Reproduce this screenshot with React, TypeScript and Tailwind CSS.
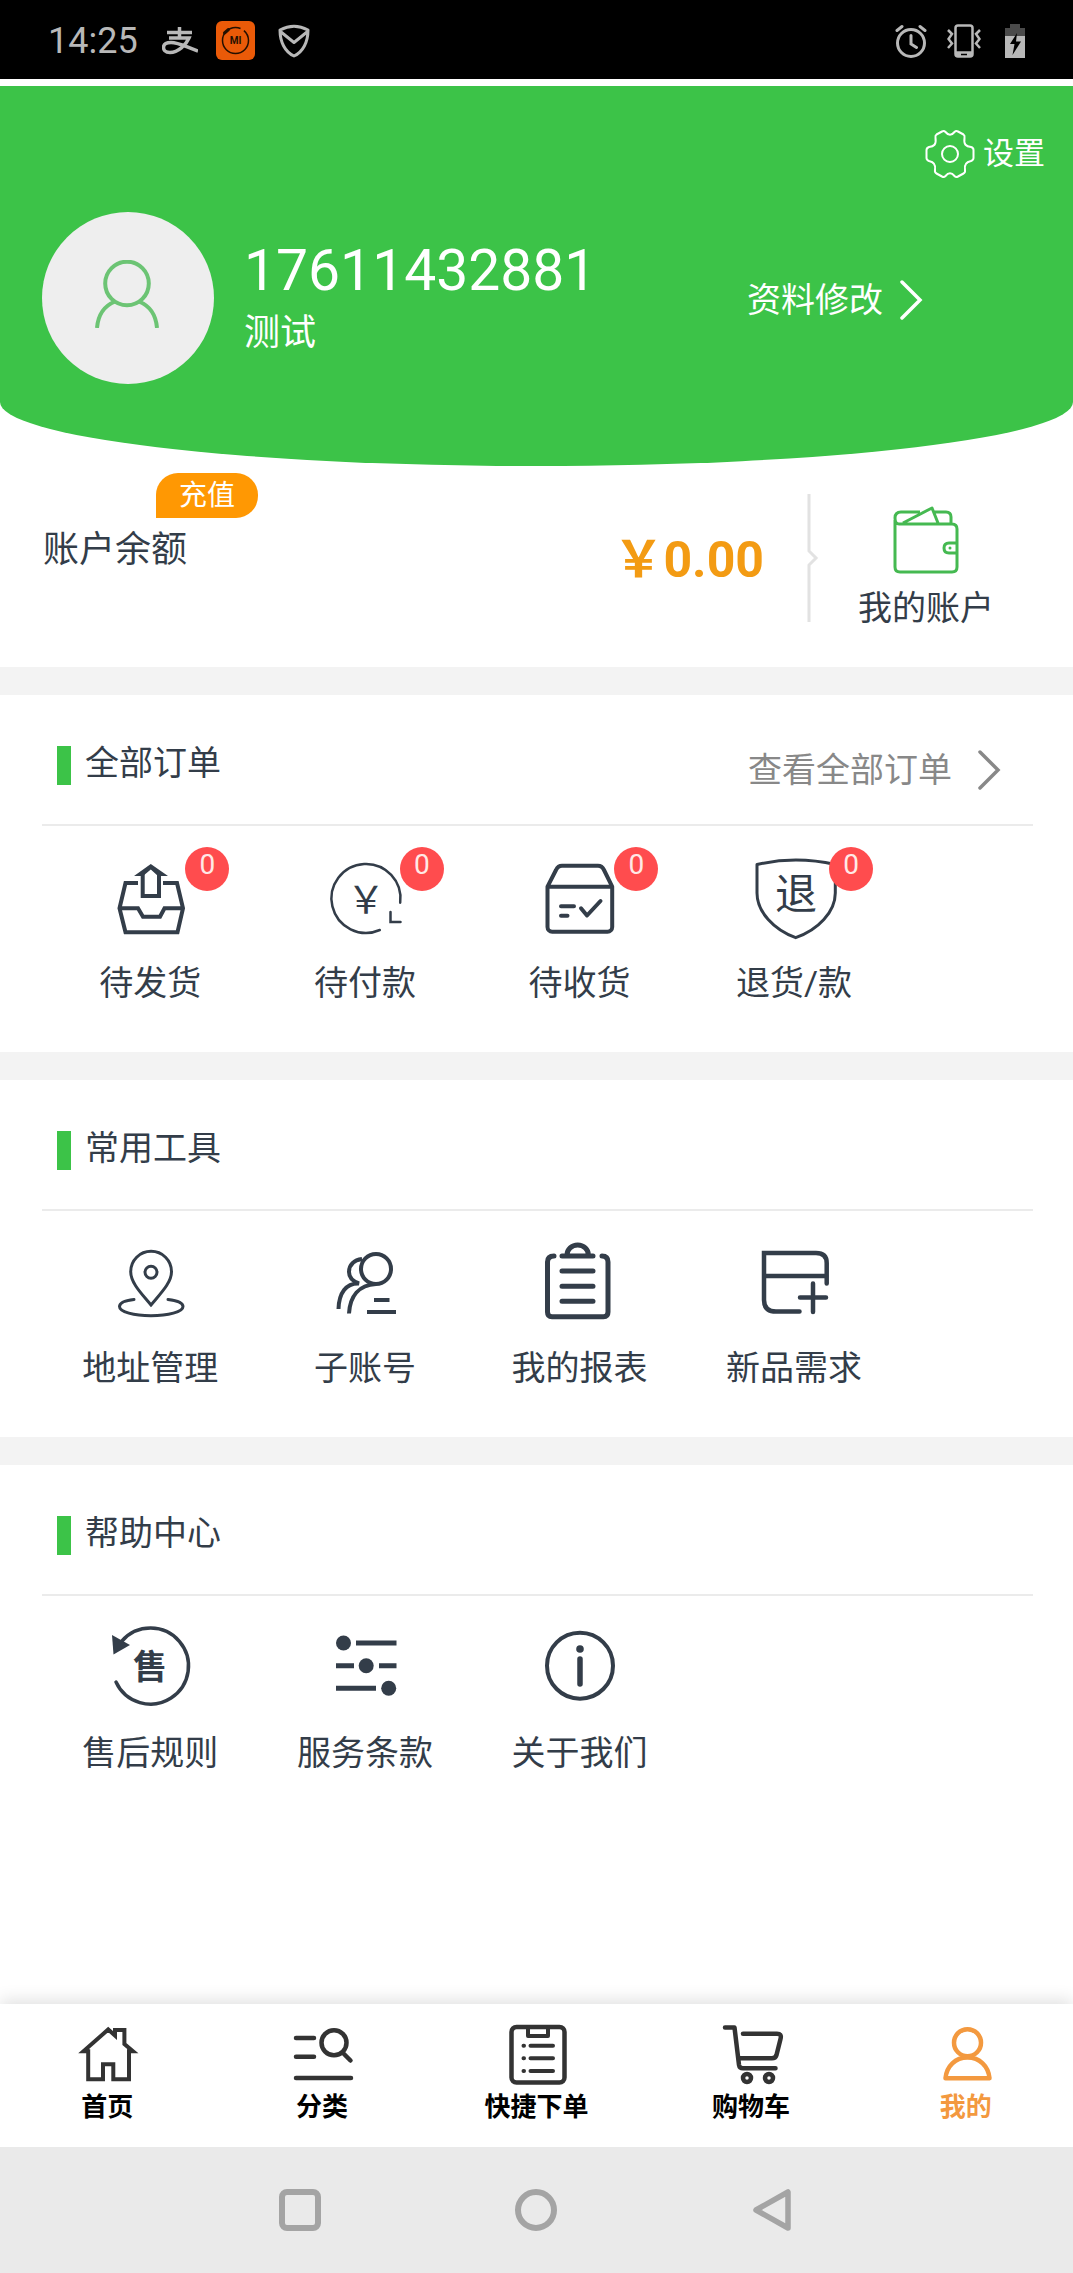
import type { ReactNode } from "react"

const SectionIcon = ({ children }: { children: ReactNode }) => (
    <svg viewBox="0 0 84 84" fill="none" stroke="currentColor" className="h-[84px] w-[84px] overflow-visible">{children}</svg>
)

const TabIcon = ({ children }: { children: ReactNode }) => (
    <svg viewBox="0 0 66 66" fill="none" stroke="currentColor" strokeWidth="4.5" strokeLinecap="round" strokeLinejoin="round" className="h-[66px] w-[66px]">{children}</svg>
)

const Chevron = () => (
    <svg viewBox="0 0 24 40" fill="none" stroke="currentColor" strokeWidth="3.5" strokeLinecap="round" className="h-10 w-6">
        <path d="M3 2 21 20 3 38" />
    </svg>
)

const orders = [
    {
        label: "待发货", count: 0, icon: (
            <SectionIcon>
                <path strokeWidth="4" d="M30 26H17.500L11.500 51.300 17.500 75.300H69.500L75 51.300 69 26H55M11.500 51.300H30L35 59.700H52L56.500 51.300H75" />
                <path strokeWidth="4" d="M34.700 16V39H51V16" />
                <path fill="currentColor" stroke="none" d="M26 19 42.800 7 60 19H50L42.800 12.500 35 19Z" />
            </SectionIcon>
        )
    },
    {
        label: "待付款", count: 0, icon: (
            <SectionIcon>
                <path strokeWidth="2.5" strokeLinecap="round" d="M77.200 45.700A34.500 34.500 0 1 0 56.800 73M67.500 55V65H77.500" />
                <text x="43" y="56" textAnchor="middle" fill="currentColor" stroke="none" className="text-[38px]">￥</text>
            </SectionIcon>
        )
    },
    {
        label: "待收货", count: 0, icon: (
            <SectionIcon>
                <path strokeWidth="4" strokeLinecap="round" strokeLinejoin="round" d="M10.500 29.700V70A4.700 4.700 0 0 0 15.200 74.700H70.500A4.700 4.700 0 0 0 75.200 70V29.700L67 13Q65 8.700 61 8.700H25Q21 8.700 19 13ZM10.500 29.700H75.200M24 49.300H37M24 58.700H30.500M44 51.300 50 58.500 63.500 44" />
            </SectionIcon>
        )
    },
    {
        label: "退货/款", count: 0, icon: (
            <SectionIcon>
                <path strokeWidth="3" strokeLinejoin="round" d="M5 7.500Q43.700-1.500 83.300 7.500V36C83.300 55 66 73 43.700 80.700 22 73 5 55 5 36Z" />
                <text x="44" y="52" textAnchor="middle" fill="currentColor" stroke="none" className="text-[42px]">退</text>
            </SectionIcon>
        )
    },
]

const tools = [
    {
        label: "地址管理", icon: (
            <SectionIcon>
                <path strokeWidth="3" d="M43 63C34 52 22.700 41 22.700 29.700A20.400 20.400 0 0 1 63.500 29.700C63.500 41 52 52 43 63Z" />
                <circle cx="43" cy="30.300" r="6" strokeWidth="3" />
                <path strokeWidth="3" strokeLinecap="round" d="M26 57.500C17 58.500 11.500 61 11.500 64.500 11.500 70 26 73.700 43 73.700S75 70 75 64.500C75 61 69 58.500 60 57.500" />
            </SectionIcon>
        )
    },
    {
        label: "子账号", icon: (
            <SectionIcon>
                <circle cx="53" cy="27" r="15" strokeWidth="4" />
                <path strokeWidth="4" d="M39 17C31 18 26 23 26 30 26 35 29 39 36 41.500 23 41 16 51 15.500 67M26 71.500C27 54 36 43 53 42M51 58H66.500M44 70H73" />
            </SectionIcon>
        )
    },
    {
        label: "我的报表", icon: (
            <SectionIcon>
                <path strokeWidth="5" strokeLinecap="round" d="M17 14Q10.500 14 10.500 20V70Q10.500 74.700 15 74.700H66.500Q71 74.700 71 70V20Q71 14 65 14M25 14H56M30 13A10.700 10 0 0 1 51.400 13M25 29H56M25 44.300H56M25 59.300H56" />
            </SectionIcon>
        )
    },
    {
        label: "新品需求", icon: (
            <SectionIcon>
                <path strokeWidth="4.500" strokeLinecap="round" d="M74.700 41.500V21Q74.700 11 64 11H12V58Q12 69.500 24 69.500H47.500M12 34H74.700M61 41.500V70M48 55.500H74" />
            </SectionIcon>
        )
    },
]

const help = [
    {
        label: "售后规则", icon: (
            <SectionIcon>
                <path strokeWidth="3.500" strokeLinecap="round" d="M14 14A38 38 0 1 1 8 55" />
                <path fill="currentColor" stroke="none" d="M4 8 22 18 5.500 27.500Z" />
                <text x="42" y="52" textAnchor="middle" fill="currentColor" stroke="none" className="text-[34px] font-bold">售</text>
            </SectionIcon>
        )
    },
    {
        label: "服务条款", icon: (
            <SectionIcon>
                <path strokeWidth="5" d="M33 16H73.500M13 38.700H31M56 38.700H73.500M13 61.300H53" />
                <g fill="currentColor" stroke="none">
                    <circle cx="20.500" cy="16" r="7.500" />
                    <circle cx="43.200" cy="38.700" r="7.500" />
                    <circle cx="65.700" cy="61.300" r="7.500" />
                </g>
            </SectionIcon>
        )
    },
    {
        label: "关于我们", icon: (
            <SectionIcon>
                <circle cx="43" cy="38.700" r="33" strokeWidth="4" />
                <path strokeWidth="5.500" strokeLinecap="round" d="M43 32V57" />
                <circle cx="43" cy="22" r="3.800" fill="currentColor" stroke="none" />
            </SectionIcon>
        )
    },
]

const tabs = [
    {
        label: "首页", icon: (
            <TabIcon>
                <path strokeWidth="4" strokeLinejoin="miter" d="M14.200 28.300H9.500L34.200 6.500 41 12.500V7H50.400V21L59 28.300H55V56.300H39.300V41.300H29V56.300H14.200Z" />
            </TabIcon>
        )
    },
    {
        label: "分类", icon: (
            <TabIcon>
                <path d="M7 15H25M7 33.700H25M7 55H62M55 31 61.500 37.500" />
                <circle cx="45" cy="19.700" r="12.500" />
            </TabIcon>
        )
    },
    {
        label: "快捷下单", icon: (
            <TabIcon>
                <rect x="8.500" y="4" width="53" height="55.500" rx="5" />
                <path d="M25 4V13H45V4M27.500 22.700H50M27.500 35.300H50M27.500 48H50M20.500 22.700H21M20.500 35.300H21M20.500 48H21" strokeWidth="4" />
            </TabIcon>
        )
    },
    {
        label: "购物车", icon: (
            <TabIcon>
                <path d="M7 4.500H16.500L21 42Q21.500 45.300 25 45.300H57.500M25 10.700H59Q64 10.700 62.500 16L58.500 32Q57.500 35.300 54 35.300H21" />
                <circle cx="29" cy="55" r="4" />
                <circle cx="51" cy="55" r="4" />
            </TabIcon>
        )
    },
    {
        label: "我的", active: true, icon: (
            <TabIcon>
                <circle cx="34.500" cy="19.700" r="13.500" />
                <path d="M12.500 55.300C13.500 43 22.500 34.500 34.500 34.500S55.500 43 56.500 55.300Z" />
            </TabIcon>
        )
    },
]

type Item = { label: string, icon: ReactNode, count?: number }

function Section(props: { title: string, items: Item[], more?: string, last?: boolean }) {
    return (
        <section className={props.last ? "flex-1 bg-white" : "bg-white pb-[45px]"}>
            <div className="mr-10 ml-[42px] flex h-[131px] items-center justify-between border-b-2 border-[#ebebeb] pt-3 pr-8 pl-[15px]">
                <div className="flex items-center gap-[14px]">
                    <span className="h-[39px] w-[14px] bg-[#3cc348]"></span>
                    <h2 className="pb-1.5 text-[34px] leading-[40px]">{props.title}</h2>
                </div>
                {props.more && (
                    <a href="#" className="flex items-center gap-[25px] pt-2 text-[34px] leading-[40px] text-[#888]">
                        {props.more}
                        <Chevron />
                    </a>
                )}
            </div>
            <div className="flex pt-[31px] pl-[43px]">
                {props.items.map((item) => (
                    <a href="#" key={item.label} className="flex w-[20vw] flex-col items-center gap-[18px]">
                        <div className="relative">
                            {item.icon}
                            {item.count !== undefined && (
                                <span className="absolute -top-[10px] left-[77px] h-11 w-11 rounded-full bg-[#ff4c4e] text-center text-[28px] leading-[36px] text-[#ffe9e6]">{item.count}</span>
                            )}
                        </div>
                        <span className="text-[34px] leading-[48px]">{item.label}</span>
                    </a>
                ))}
            </div>
        </section>
    )
}

function StatusBar() {
    return (
        <div className="flex h-[79px] items-center justify-between bg-black px-12 pt-[2px] text-[#b8b8b8]">
            <div className="flex items-center">
                <span className="text-[36px] leading-[40px]">14:25</span>
                <svg viewBox="0 0 36 28" fill="none" stroke="currentColor" strokeWidth="3.500" className="ml-6 h-7 w-9">
                    <path d="M5 5.500H30M17.500 0V11M7 11H27C24 18 16 25.500 8 25.500 3 25.500 1.500 22.500 1.500 20.500 1.500 17 5 15.500 9 15.500 17 15.500 24 20 36 24" />
                </svg>
                <svg viewBox="0 0 39 39" fill="none" stroke="#241000" className="ml-[18px] h-[39px] w-[39px]">
                    <rect width="39" height="39" rx="6" fill="#ea5a08" stroke="none" />
                    <circle cx="19.500" cy="19.500" r="13" strokeWidth="1.500" strokeDasharray="66 4" />
                    <path strokeWidth="3" strokeLinecap="round" d="M8.500 12 12.500 8.500" />
                    <text x="19.500" y="23" textAnchor="middle" fill="#241000" stroke="none" className="text-[10px] font-bold">MI</text>
                </svg>
                <svg viewBox="0 0 32 34" fill="none" stroke="currentColor" strokeWidth="3" strokeLinejoin="round" className="ml-[23px] h-[34px] w-8">
                    <path d="M2 6Q16-1.500 30 6C30 18 25 28 16 32 7 28 2 18 2 6ZM3 8 16 18.500 29 8" />
                </svg>
            </div>
            <div className="flex items-center gap-5">
                <svg viewBox="0 0 32 34" fill="none" stroke="currentColor" strokeWidth="3" strokeLinecap="round" className="h-[34px] w-8">
                    <circle cx="16" cy="19" r="13.500" />
                    <path d="M16 11.500V20L21.500 23.500M2 6.500 7 2.500M30 6.500 25 2.500" />
                </svg>
                <svg viewBox="0 0 34 34" fill="none" stroke="currentColor" strokeWidth="2.500" className="h-[34px] w-[34px]">
                    <rect x="8.500" y="1.500" width="17" height="31" rx="2.500" />
                    <path d="M8.500 28.500H25.500M1 6 5 10 1.500 15 5 19.500 1 24M33 6 29 10 32.500 15 29 19.500 33 24" />
                    <path d="M9 30.500H14M20 30.500H25" strokeWidth="4" />
                </svg>
                <svg viewBox="0 0 20 34" className="ml-1 h-[34px] w-5">
                    <path fill="#4a4a4a" d="M5 0H15V4H20V12H0V4H5Z" />
                    <path fill="currentColor" d="M0 12H20V34H0Z" />
                    <path fill="#000" d="M12 9 5 20H9.500L7.500 31 16 17.500H11Z" />
                </svg>
            </div>
        </div>
    )
}

export default function App() {
    return (
        <div className="flex min-h-screen flex-col bg-white font-['Roboto','Noto_Sans_CJK_SC',sans-serif] text-[#333d49]">
            <StatusBar />
            <header className="mt-[7px] rounded-b-[50%_64px] bg-[#3cc348] pt-[41px] pb-[82px] text-white">
                <div className="flex justify-end pr-7">
                    <a href="#" className="flex h-[54px] items-center gap-2 text-[31px] leading-[40px]">
                        <svg viewBox="0 0 50 50" fill="none" stroke="currentColor" strokeWidth="2" strokeLinejoin="round" className="h-[50px] w-[50px]">
                            <path d="M17 2.500Q19 1.500 20.500 3 25 8.500 29.500 3 31 1.500 33 2.500L38.500 5.500Q40 6.500 39.500 9C38.500 15.500 41 17.500 46 18 48 18.500 48.500 19.500 48.500 21V29Q48.500 31 46 32C41 33 39 35.500 40 41Q40.500 43.500 38.500 44.500L33 47.500Q31 48.500 29.500 47 25 41.500 20.500 47 19 48.500 17 47.500L11.500 44.500Q9.500 43.500 10 41C11 35.500 9 33 4 32Q1.500 31 1.500 29V21Q1.500 19 4 18C9 17.500 11.500 15.500 10.500 9Q10 6.500 11.500 5.500Z" />
                            <circle cx="25" cy="25" r="8" />
                        </svg>
                        设置
                    </a>
                </div>
                <div className="mt-[31px] flex items-center pl-[42px]">
                    <div className="flex h-[172px] w-[172px] items-center justify-center rounded-full bg-[#eee] pr-0.5 pb-2">
                        <svg viewBox="0 0 66 68" fill="none" stroke="#6cc474" strokeWidth="4" className="h-[68px] w-[66px]">
                            <circle cx="33" cy="23.500" r="21.800" />
                            <path d="M3 68C4 55 10 46 21 41.500M63 68C62 55 56 46 45 41.500" />
                        </svg>
                    </div>
                    <div className="ml-[30px] pt-[2px]">
                        <p className="text-[57px] leading-[68px]">17611432881</p>
                        <p className="text-[36px] leading-[56px]">测试</p>
                    </div>
                    <a href="#" className="mr-[150px] ml-auto flex items-center gap-4 pt-1 text-[34px] leading-[40px]">
                        资料修改
                        <Chevron />
                    </a>
                </div>
            </header>
            <section className="flex items-start pt-7 pr-10 pb-[35px] pl-[43px]">
                <div className="relative mt-[31px]">
                    <h2 className="text-[36px] leading-[50px]">账户余额</h2>
                    <button className="absolute bottom-full left-[113px] mb-[7px] h-[45px] w-[102px] rounded-[22px] rounded-bl-none bg-[#ff9803] text-[28px] leading-[45px] text-white">充值</button>
                </div>
                <p className="mt-9 ml-auto text-[50px] leading-[60px] font-bold text-[#f39b13]">￥0.00</p>
                <svg viewBox="0 0 12 128" fill="none" stroke="#e2e2e2" strokeWidth="3" className="ml-[43px] h-32 w-3">
                    <path d="M2 0V57L9 64 2 71V128" />
                </svg>
                <a href="#" className="flex w-[214px] flex-col items-center gap-[10px] pt-3">
                    <svg viewBox="0 0 66 68" fill="none" stroke="#45b951" strokeWidth="3" strokeLinejoin="round" className="h-[68px] w-[66px]">
                        <path d="M2 14V61Q2 66 7 66H59Q64 66 64 61V23Q64 18 59 18H6Q2 18 2 12 2 6 8 6H27M41 6H53Q58 6 58 11V18M10 17 39 2 45 17M64 37H56Q51 37 51 42T56 47H64" />
                        <circle cx="57" cy="42" r="1.500" fill="#45b951" stroke="none" />
                    </svg>
                    <span className="text-[34px] leading-[48px]">我的账户</span>
                </a>
            </section>
            <main className="flex flex-1 flex-col gap-7 bg-[#f3f3f3] pt-7">
                <Section title="全部订单" items={orders} more="查看全部订单" />
                <Section title="常用工具" items={tools} />
                <Section title="帮助中心" items={help} last />
            </main>
            <nav className="flex bg-white pt-[19px] pb-[21px] shadow-[0_-4px_16px_rgba(0,0,0,0.12)]">
                {tabs.map((tab) => (
                    <a href="#" key={tab.label} className={tab.active ? "flex flex-1 flex-col items-center text-[#f3993f]" : "flex flex-1 flex-col items-center text-[#333]"}>
                        {tab.icon}
                        <span className={tab.active ? "text-[26px] leading-[37px] font-bold" : "text-[26px] leading-[37px] font-bold text-black"}>{tab.label}</span>
                    </a>
                ))}
            </nav>
            <div className="flex h-[126px] items-center justify-center bg-[#eaeaea]">
                <button aria-label="最近任务" className="flex w-[22%] justify-center">
                    <span className="h-[42px] w-[42px] rounded-lg border-[6px] border-[#a4a4a4]"></span>
                </button>
                <button aria-label="主屏幕" className="flex w-[22%] justify-center">
                    <span className="h-[42px] w-[42px] rounded-full border-[6px] border-[#a4a4a4]"></span>
                </button>
                <button aria-label="返回" className="flex w-[22%] justify-center">
                    <svg viewBox="0 0 42 42" fill="none" stroke="#a4a4a4" strokeWidth="5.500" strokeLinejoin="round" className="h-[42px] w-[42px]">
                        <path d="M36 3V39L4 21Z" />
                    </svg>
                </button>
            </div>
        </div>
    )
}
